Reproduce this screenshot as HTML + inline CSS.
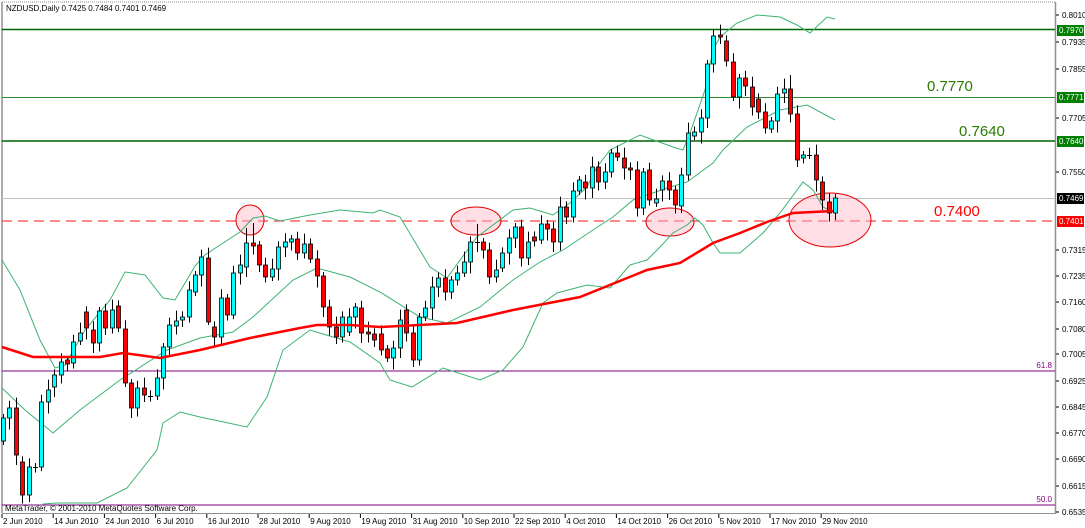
<!DOCTYPE html>
<html><head><meta charset="utf-8"><style>
html,body{margin:0;padding:0;background:#fff;}
body{width:1085px;height:528px;overflow:hidden;position:relative;font-family:"Liberation Sans",Tahoma,sans-serif;}
svg{position:absolute;left:0;top:0;}
</style></head><body>
<svg id="s" width="1085" height="528" xmlns="http://www.w3.org/2000/svg" font-family="Liberation Sans, sans-serif">
<rect x="0" y="0" width="1085" height="528" fill="#fff"/>
<line x1="2" y1="2" x2="1055" y2="2" stroke="#909090" stroke-width="1" stroke-dasharray="1,1"/>
<line x1="2" y1="2" x2="2" y2="513" stroke="#909090" stroke-width="1.5"/>
<line x1="1055.5" y1="2" x2="1055.5" y2="514" stroke="#909090" stroke-width="1.5"/>
<line x1="2" y1="513.5" x2="1056" y2="513.5" stroke="#909090" stroke-width="1"/>
<line x1="2" y1="29.5" x2="1055" y2="29.5" stroke="#006400" stroke-width="1.5"/>
<line x1="2" y1="97.5" x2="1055" y2="97.5" stroke="#2e8b2e" stroke-width="1"/>
<line x1="2" y1="141" x2="1055" y2="141" stroke="#006400" stroke-width="1.5"/>
<line x1="2" y1="198.5" x2="1055" y2="198.5" stroke="#c0c0c0" stroke-width="1"/>
<line x1="2" y1="221" x2="1055" y2="221" stroke="#ff4040" stroke-width="1.2" stroke-dasharray="10,6"/>
<line x1="2" y1="371" x2="1055" y2="371" stroke="#800080" stroke-width="1"/>
<line x1="2" y1="505" x2="1055" y2="505" stroke="#800080" stroke-width="1"/>
<text x="1052" y="368" font-size="8" fill="#800080" text-anchor="end">61.8</text>
<text x="1052" y="502" font-size="8" fill="#800080" text-anchor="end">50.0</text>
<g id="ell" fill="#ffb6c8" fill-opacity="0.45" stroke="#e00000" stroke-width="1">
<ellipse cx="250" cy="220" rx="14" ry="15"/>
<ellipse cx="476" cy="221" rx="25" ry="14"/>
<ellipse cx="670" cy="222" rx="24" ry="14"/>
<ellipse cx="830" cy="220" rx="41" ry="27"/>
</g>
<g id="bands" fill="none" stroke="#3cb371" stroke-width="1"></g>
<g id="candles"></g>
<polyline id="ma" fill="none" stroke="#ff0000" stroke-width="2.5" points="2,347 33,357 100,357 123,353 160,358 200,350 250,338 300,328 317,325 350,325 380,327 457,323 513,310 580,297 647,270 680,263 713,243 740,233 767,222 793,213 833,211"/>
<text x="6" y="11" font-size="8" fill="#000">NZDUSD,Daily  0.7425 0.7484 0.7401 0.7469</text>
<text x="5" y="511" font-size="8" fill="#000">MetaTrader, © 2001-2010 MetaQuotes Software Corp.</text>
<text x="927" y="91" font-size="15" fill="#2a7a00">0.7770</text>
<text x="959" y="136" font-size="15" fill="#2a7a00">0.7640</text>
<text x="934" y="216" font-size="15" fill="#ff0000">0.7400</text>
<g id="axis" font-size="8" fill="#000"></g>
<g id="dates" font-size="8" fill="#000"></g>
</svg>
<script>
var NS="http://www.w3.org/2000/svg";
function el(p,t,a,txt){var e=document.createElementNS(NS,t);for(var k in a)e.setAttribute(k,a[k]);if(txt)e.textContent=txt;p.appendChild(e);return e;}
var d=[[1,418,441],[1,408,418],[0,408,455],[0,462,495],[1,467,495],[2,467,467],[1,402,467],[1,390,402],[1,375,387],[1,362,375],
[0,360,364],[1,342,363],[1,333,341],[0,312,328],[0,330,343],[1,311,343],[0,311,328],[1,310,328],[0,306,328],[0,329,383],
[0,383,408],[1,388,408],[0,388,395],[2,396,396],[1,378,396],[1,347,378],[1,325,347],[1,321,326],[1,317,320],[1,290,317],
[1,275,292],[1,257,275],[0,258,322],[0,327,337],[1,298,337],[0,298,315],[1,273,315],[1,265,273],[1,243,267],[0,243,246],
[0,245,265],[0,265,277],[1,269,277],[1,247,269],[1,242,247],[1,239,242],[0,239,253],[1,244,253],[0,244,259],[0,259,276],
[0,276,307],[0,307,327],[0,327,337],[1,317,337],[1,317,332],[1,307,317],[0,308,333],[0,332,334],[0,334,340],[0,334,350],
[0,349,358],[1,348,358],[1,320,348],[0,310,333],[0,333,360],[1,317,360],[1,308,317],[1,287,308],[1,278,287],[0,278,292],
[1,280,292],[1,273,280],[1,262,273],[1,242,262],[2,242,242],[0,242,250],[0,250,277],[1,270,277],[1,253,268],[1,238,253],
[1,227,238],[0,227,258],[1,242,258],[0,237,241],[1,224,240],[0,224,229],[0,229,242],[1,207,242],[0,207,217],[1,191,217],
[1,180,191],[0,182,188],[1,167,188],[0,167,182],[1,172,182],[1,153,172],[0,153,157],[0,158,168],[0,168,170],[0,170,208],
[1,172,208],[0,170,200],[1,199,203],[1,181,190],[0,181,190],[0,190,205],[1,175,206],[1,133,175],[1,132,136],[1,118,132],
[1,64,118],[1,36,64],[0,35,37],[0,41,61],[0,62,97],[1,78,97],[0,78,86],[0,87,107],[0,99,112],[0,112,128],
[1,121,129],[1,94,121],[1,89,93],[0,89,114],[0,114,160],[1,155,158],[2,155,155],[0,155,180],[0,182,200],[0,202,213],[1,198,213]];
var g=document.getElementById('candles');
for(var i=0;i<d.length;i++){var x=Math.round(3+i*6.4)+0.5,c=d[i][0],t=d[i][1],b=d[i][2];
 var w1=4+((i*7)%5)*1.6,w2=4+((i*11)%6)*1.5;
 if(i==38)w1=15;if(i==39)w1=20;if(i==74)w1=18;if(i==111)w1=7;if(i==123)w1=14;if(i==19)w2=4;if(i==32)w2=3;
 el(g,'line',{x1:x,y1:t-w1,x2:x,y2:b+w2,stroke:'#000','stroke-width':1});
 if(c==2){el(g,'line',{x1:x-2.5,y1:t+.5,x2:x+2.5,y2:t+.5,stroke:'#000','stroke-width':1});}
 else{var h=Math.max(b-t,2);el(g,'rect',{x:x-2,y:t,width:4,height:h,fill:c==1?'#00ffff':'#ff0000',stroke:'#000','stroke-width':0.8});}
}
var bands=document.getElementById('bands');
var up="2,260 20,290 40,340 55,368 65,365 85,330 110,300 125,272 145,275 163,298 175,300 195,266 205,255 220,245 240,232 253,218 265,216 280,221 310,215 340,210 373,213 380,210 400,217 430,267 447,278 477,237 513,210 530,208 553,215 570,203 587,187 597,167 610,150 640,135 673,147 683,150 690,133 705,90 713,50 720,37 737,23 757,15 780,17 797,25 810,33 827,17 835,19";
var mid="2,388 25,410 53,433 80,410 120,380 167,350 200,338 233,332 253,317 293,280 317,268 350,277 380,292 420,317 447,323 480,307 513,280 540,262 563,250 593,230 613,217 633,200 667,188 687,182 713,163 723,150 747,127 780,110 807,105 835,120";
var lo="43,504 57,503 97,503 127,488 157,450 163,423 180,412 200,417 247,427 267,397 283,350 310,330 333,337 350,342 380,363 390,380 412,387 443,368 480,380 503,370 523,347 543,303 557,293 587,285 610,288 630,265 647,260 660,247 673,233 687,225 695,218 703,225 713,243 720,253 740,253 763,233 780,213 803,182 813,190 823,207 835,213";
[up,mid,lo].forEach(function(p){el(bands,'polyline',{points:p});});
var ax=document.getElementById('axis');
var ticks=[["0.8010",15],["0.7935",42],["0.7855",69],["0.7705",118],["0.7550",172],["0.7315",250],["0.7235",276],["0.7160",302],["0.7080",329],["0.7005",354],["0.6925",381],["0.6845",407],["0.6770",433],["0.6690",459],["0.6615",486],["0.6535",512]];
ticks.forEach(function(t){el(ax,'line',{x1:1056,y1:t[1],x2:1059,y2:t[1],stroke:'#000'});el(ax,'text',{x:1062,y:t[1]+3},t[0]);});
var boxes=[["0.7970",30,"#008000","#fff"],["0.7771",97,"#008000","#fff"],["0.7640",141,"#008000","#fff"],["0.7469",198,"#000","#fff"],["0.7401",221,"#ff0000","#fff"]];
boxes.forEach(function(b){el(ax,'rect',{x:1057,y:b[1]-5,width:27,height:11,fill:b[2]});el(ax,'text',{x:1059,y:b[1]+3,fill:b[3]},b[0]);});
var dg=document.getElementById('dates');
var dates=["2 Jun 2010","14 Jun 2010","24 Jun 2010","6 Jul 2010","16 Jul 2010","28 Jul 2010","9 Aug 2010","19 Aug 2010","31 Aug 2010","10 Sep 2010","22 Sep 2010","4 Oct 2010","14 Oct 2010","26 Oct 2010","5 Nov 2010","17 Nov 2010","29 Nov 2010"];
dates.forEach(function(t,i){var x=2+i*51.2;el(dg,'line',{x1:x,y1:514,x2:x,y2:518,stroke:'#000'});el(dg,'text',{x:x+1,y:524},t);});
</script>
</body></html>
